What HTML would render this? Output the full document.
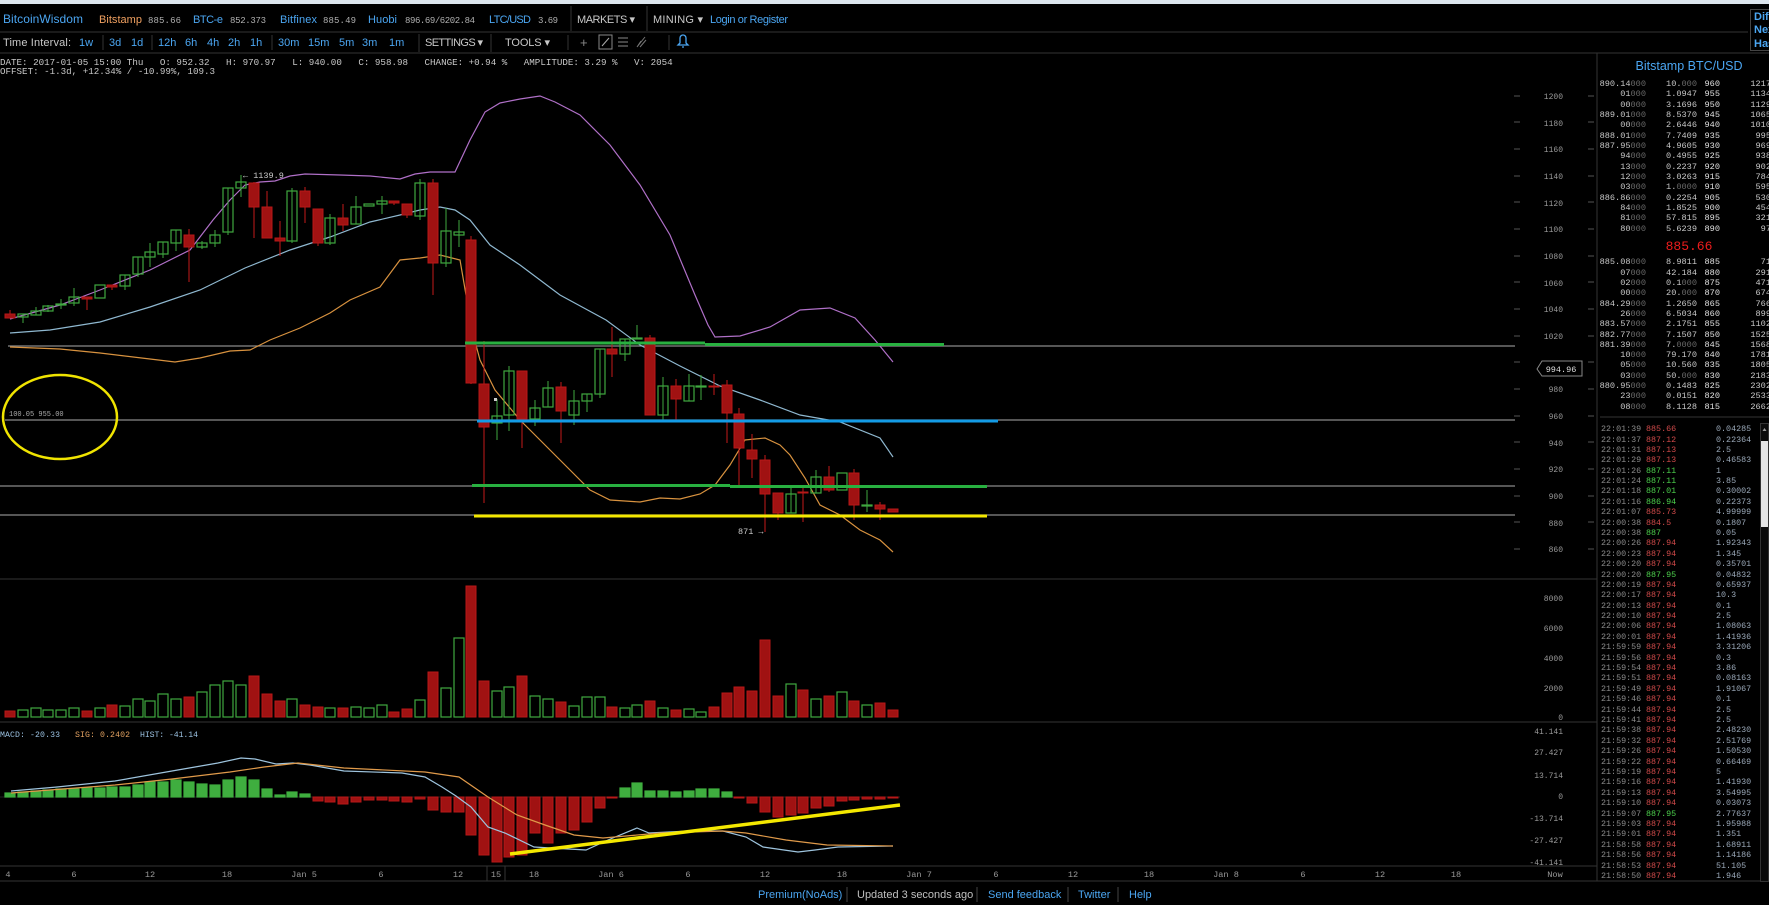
<!DOCTYPE html>
<html><head><meta charset="utf-8"><style>
html,body{margin:0;padding:0;background:#000;width:1769px;height:905px;overflow:hidden}
svg{display:block}
.s{font-family:"Liberation Sans",sans-serif}
.m{font-family:"Liberation Mono",monospace}
.r line{stroke:#c41a1a;stroke-width:1}
.r rect{fill:#a01212;stroke:#b81818;stroke-width:1}
.g line{stroke:#3fa83f;stroke-width:1}
.g rect{fill:none;stroke:#3fa83f;stroke-width:1.2}
.gf rect{fill:#3fae3f;stroke:#3fae3f}
.ax{fill:#9a9a9a;font-size:8px}
.ob{font-size:8.6px}
.d{fill:#6a6a6a}.b{fill:#c8c8c8}.lv{fill:#e0e0e0}
.tr{font-size:8.4px}
.tt{fill:#8a8a8a}.tp{fill:#d04a4a}.tg{fill:#4cd04c}.ta{fill:#9aa8b8}
</style></head><body>
<svg width="1769" height="905" viewBox="0 0 1769 905" xmlns="http://www.w3.org/2000/svg">
<rect width="1769" height="905" fill="#000"/>
<rect x="0" y="0" width="1769" height="4" fill="#dde6ee"/>
<!-- nav -->
<g class="s" font-size="11">
<text x="3" y="23" fill="#4ba6f2" font-size="12" textLength="80">BitcoinWisdom</text>
<text x="99" y="23" fill="#f0a060" textLength="43">Bitstamp</text>
<text x="148" y="23" fill="#b0b0b0" class="m" font-size="9" textLength="33">885.66</text>
<text x="193" y="23" fill="#4ba6f2" textLength="30">BTC-e</text>
<text x="230" y="23" fill="#b0b0b0" class="m" font-size="9" textLength="36">852.373</text>
<text x="280" y="23" fill="#4ba6f2" textLength="37">Bitfinex</text>
<text x="323" y="23" fill="#b0b0b0" class="m" font-size="9" textLength="33">885.49</text>
<text x="368" y="23" fill="#4ba6f2" textLength="29">Huobi</text>
<text x="405" y="23" fill="#b0b0b0" class="m" font-size="9" textLength="70">896.69/6202.84</text>
<text x="489" y="23" fill="#4ba6f2" textLength="42">LTC/USD</text>
<text x="538" y="23" fill="#b0b0b0" class="m" font-size="9" textLength="20">3.69</text>
<text x="577" y="23" fill="#c8c8c8" textLength="58">MARKETS ▾</text>
<text x="653" y="23" fill="#c8c8c8" textLength="50">MINING ▾</text>
<text x="710" y="23" fill="#4ba6f2" textLength="78">Login or Register</text>
<text x="3" y="46" fill="#c8c8c8" textLength="68">Time Interval:</text>
<g fill="#4ba6f2">
<text x="79" y="46">1w</text><text x="109" y="46">3d</text><text x="131" y="46">1d</text>
<text x="158" y="46">12h</text><text x="185" y="46">6h</text><text x="207" y="46">4h</text><text x="228" y="46">2h</text><text x="250" y="46">1h</text>
<text x="278" y="46">30m</text><text x="308" y="46">15m</text><text x="339" y="46">5m</text><text x="362" y="46">3m</text><text x="389" y="46">1m</text>
</g>
<text x="425" y="46" fill="#c8c8c8" textLength="58">SETTINGS ▾</text>
<text x="505" y="46" fill="#c8c8c8" textLength="45">TOOLS ▾</text>
<text x="580" y="47" fill="#888" font-size="13">+</text>
<rect x="599" y="35" width="13" height="14" fill="none" stroke="#888"/>
<line x1="602" y1="46" x2="609" y2="38" stroke="#aaa"/>
<g stroke="#888"><line x1="618" y1="38" x2="628" y2="38"/><line x1="618" y1="42" x2="628" y2="42"/><line x1="618" y1="46" x2="628" y2="46"/></g>
<path d="M637 47 L645 37 M637 47 L641 41 M640 47 L646 40" stroke="#777" fill="none"/>
<path d="M680 38 a3 3 0 0 1 6 0 v5 l2 2 h-10 l2 -2 z M682 47 h2" stroke="#4ba6f2" fill="none" stroke-width="1.3"/>
</g>
<g stroke="#333">
<line x1="571" y1="6" x2="571" y2="31"/><line x1="647" y1="6" x2="647" y2="31"/>
<line x1="103" y1="35" x2="103" y2="50"/><line x1="152" y1="35" x2="152" y2="50"/><line x1="272" y1="35" x2="272" y2="50"/>
<line x1="419" y1="34" x2="419" y2="52"/><line x1="491" y1="34" x2="491" y2="52"/><line x1="568" y1="35" x2="568" y2="50"/><line x1="669" y1="35" x2="669" y2="50"/>
</g>
<line x1="0" y1="32" x2="1748" y2="32" stroke="#333"/>
<line x1="0" y1="53" x2="1769" y2="53" stroke="#333"/>
<rect x="1750.5" y="9.5" width="20" height="41" fill="none" stroke="#444"/>
<g class="s" font-size="11" font-weight="bold" fill="#4ba6f2"><text x="1754" y="20">Dif</text><text x="1754" y="33">Nex</text><text x="1754" y="47">Has</text></g>
<!-- info -->
<g class="m" font-size="9.2" fill="#c8c8c8">
<text x="0" y="65" xml:space="preserve">DATE: 2017-01-05 15:00 Thu   O: 952.32   H: 970.97   L: 940.00   C: 958.98   CHANGE: +0.94 %   AMPLITUDE: 3.29 %   V: 2054</text>
<text x="0" y="74">OFFSET: -1.3d, +12.34% / -10.99%, 109.3</text>
</g>
<!-- panel lines -->
<g stroke="#333">
<line x1="0" y1="579" x2="1597" y2="579"/><line x1="0" y1="722" x2="1597" y2="722"/>
<line x1="0" y1="866" x2="1597" y2="866"/><line x1="0" y1="881" x2="1769" y2="881"/>
<line x1="1597" y1="53" x2="1597" y2="881"/>
<line x1="1600" y1="417" x2="1769" y2="417"/>
<line x1="487" y1="866" x2="487" y2="881"/><line x1="505" y1="866" x2="505" y2="881"/>
</g>
<!-- price axis -->
<g class="m ax" text-anchor="end">
<text x="1563" y="99">1200</text><text x="1563" y="126">1180</text><text x="1563" y="152">1160</text><text x="1563" y="179">1140</text><text x="1563" y="206">1120</text><text x="1563" y="232">1100</text><text x="1563" y="259">1080</text><text x="1563" y="286">1060</text><text x="1563" y="312">1040</text><text x="1563" y="339">1020</text><text x="1563" y="366">1000</text><text x="1563" y="392">980</text><text x="1563" y="419">960</text><text x="1563" y="446">940</text><text x="1563" y="472">920</text><text x="1563" y="499">900</text><text x="1563" y="526">880</text><text x="1563" y="552">860</text>
<text x="1563" y="601">8000</text><text x="1563" y="631">6000</text><text x="1563" y="661">4000</text><text x="1563" y="691">2000</text><text x="1563" y="720">0</text>
<text x="1563" y="734">41.141</text><text x="1563" y="755">27.427</text><text x="1563" y="778">13.714</text><text x="1563" y="799">0</text><text x="1563" y="821">-13.714</text><text x="1563" y="843">-27.427</text><text x="1563" y="865">-41.141</text>
</g>
<g stroke="#555">
<path d="M1514 96h6M1514 122h6M1514 149h6M1514 176h6M1514 202h6M1514 229h6M1514 256h6M1514 282h6M1514 309h6M1514 336h6M1514 362h6M1514 389h6M1514 416h6M1514 442h6M1514 469h6M1514 496h6M1514 522h6M1514 549h6"/>
<path d="M1588 96h6M1588 122h6M1588 149h6M1588 176h6M1588 202h6M1588 229h6M1588 256h6M1588 282h6M1588 309h6M1588 336h6M1588 362h6M1588 389h6M1588 416h6M1588 442h6M1588 469h6M1588 496h6M1588 522h6M1588 549h6"/>
</g>
<path d="M1537 369 L1542 361 H1582 V376 H1542 Z" fill="#000" stroke="#888"/>
<text x="1561" y="372" class="m" font-size="8.5" fill="#ddd" text-anchor="middle">994.96</text>
<!-- horizontal gray lines -->
<g stroke="#8a8a8a" stroke-width="1.3">
<line x1="8" y1="346" x2="1515" y2="346"/><line x1="5" y1="420" x2="1515" y2="420"/>
<line x1="0" y1="486" x2="1515" y2="486"/><line x1="0" y1="515" x2="1515" y2="515"/>
</g>
<!-- bollinger -->
<polyline fill="none" stroke="#b070c8" stroke-width="1.2" points="10,319 60,305 100,290 150,270 190,250 213,220 230,200 245,185 260,182 275,181 290,176 305,174 340,175 370,176 400,179 415,174 430,172 455,172 470,140 485,112 500,103 520,99 540,96 555,102 580,115 610,145 640,185 670,235 695,295 708,325 715,337 740,336 770,327 800,310 830,308 855,318 875,340 893,362"/>
<polyline fill="none" stroke="#8fb8d0" stroke-width="1.2" points="10,333 50,330 100,322 150,307 200,290 245,268 290,250 330,237 370,222 400,215 420,210 440,207 455,210 470,220 490,245 520,265 560,295 606,320 640,345 680,366 720,386 760,400 800,415 840,422 880,438 893,457"/>
<polyline fill="none" stroke="#d8923f" stroke-width="1.2" points="10,347 60,349 100,353 150,359 175,362 200,358 230,351 250,350 270,340 300,328 330,313 350,300 380,287 400,260 420,258 440,255 460,260 472,330 480,360 495,390 520,420 540,440 570,470 590,490 610,500 640,502 660,498 680,499 700,494 715,485 730,465 745,440 765,438 780,445 790,455 805,478 820,505 840,515 860,530 880,540 893,552"/>
<!-- candles -->
<g class="r">
<line x1="10" y1="310" x2="10" y2="318"/><rect x="5" y="314" width="10" height="4"/>
<line x1="87" y1="297" x2="87" y2="310"/><rect x="82" y="297" width="10" height="2"/>
<line x1="112" y1="285" x2="112" y2="290"/><rect x="107" y="285" width="10" height="2"/>
<line x1="189" y1="229" x2="189" y2="282"/><rect x="184" y="235" width="10" height="12"/>
<line x1="254" y1="182" x2="254" y2="238"/><rect x="249" y="183" width="10" height="24"/>
<line x1="267" y1="191" x2="267" y2="238"/><rect x="262" y="207" width="10" height="31"/>
<line x1="280" y1="221" x2="280" y2="256"/><rect x="275" y="238" width="10" height="3"/>
<line x1="305" y1="187" x2="305" y2="223"/><rect x="300" y="191" width="10" height="16"/>
<line x1="318" y1="209" x2="318" y2="246"/><rect x="313" y="209" width="10" height="34"/>
<line x1="343" y1="204" x2="343" y2="231"/><rect x="338" y="218" width="10" height="7"/>
<line x1="394" y1="201" x2="394" y2="205"/><rect x="389" y="201" width="10" height="2"/>
<line x1="407" y1="204" x2="407" y2="218"/><rect x="402" y="204" width="10" height="11"/>
<line x1="433" y1="179" x2="433" y2="295"/><rect x="428" y="183" width="10" height="80"/>
<line x1="471" y1="236" x2="471" y2="384"/><rect x="466" y="240" width="10" height="143"/>
<line x1="484" y1="341" x2="484" y2="503"/><rect x="479" y="384" width="10" height="43"/>
<line x1="522" y1="371" x2="522" y2="448"/><rect x="517" y="371" width="10" height="48"/>
<line x1="561" y1="382" x2="561" y2="443"/><rect x="556" y="387" width="10" height="24"/>
<line x1="612" y1="327" x2="612" y2="377"/><rect x="607" y="349" width="10" height="5"/>
<line x1="650" y1="335" x2="650" y2="415"/><rect x="645" y="338" width="10" height="77"/>
<line x1="676" y1="379" x2="676" y2="420"/><rect x="671" y="386" width="10" height="13"/>
<line x1="714" y1="374" x2="714" y2="395"/><rect x="709" y="386" width="10" height="1"/>
<line x1="727" y1="380" x2="727" y2="443"/><rect x="722" y="385" width="10" height="28"/>
<line x1="739" y1="408" x2="739" y2="485"/><rect x="734" y="414" width="10" height="34"/>
<line x1="752" y1="434" x2="752" y2="478"/><rect x="747" y="450" width="10" height="9"/>
<line x1="765" y1="455" x2="765" y2="532"/><rect x="760" y="460" width="10" height="34"/>
<line x1="778" y1="493" x2="778" y2="520"/><rect x="773" y="493" width="10" height="20"/>
<line x1="803" y1="488" x2="803" y2="522"/><rect x="798" y="492" width="10" height="1"/>
<line x1="829" y1="466" x2="829" y2="492"/><rect x="824" y="477" width="10" height="13"/>
<line x1="854" y1="469" x2="854" y2="520"/><rect x="849" y="473" width="10" height="32"/>
<line x1="880" y1="502" x2="880" y2="520"/><rect x="875" y="505" width="10" height="4"/>
<rect x="888" y="509" width="10" height="3"/>
</g>
<g class="g">
<line x1="23" y1="314" x2="23" y2="323"/><rect x="18" y="314" width="10" height="3"/>
<line x1="36" y1="307" x2="36" y2="315"/><rect x="31" y="311" width="10" height="4"/>
<line x1="48" y1="305" x2="48" y2="312"/><rect x="43" y="306" width="10" height="5"/>
<line x1="61" y1="299" x2="61" y2="309"/><rect x="56" y="304" width="10" height="1"/>
<line x1="74" y1="288" x2="74" y2="306"/><rect x="69" y="297" width="10" height="6"/>
<rect x="95" y="285" width="10" height="13"/>
<line x1="125" y1="275" x2="125" y2="290"/><rect x="120" y="275" width="10" height="11"/>
<line x1="138" y1="257" x2="138" y2="277"/><rect x="133" y="257" width="10" height="17"/>
<line x1="150" y1="243" x2="150" y2="267"/><rect x="145" y="252" width="10" height="5"/>
<line x1="163" y1="242" x2="163" y2="258"/><rect x="158" y="242" width="10" height="12"/>
<line x1="176" y1="230" x2="176" y2="251"/><rect x="171" y="230" width="10" height="13"/>
<line x1="202" y1="241" x2="202" y2="249"/><rect x="197" y="243" width="10" height="4"/>
<line x1="215" y1="230" x2="215" y2="247"/><rect x="210" y="235" width="10" height="8"/>
<line x1="228" y1="188" x2="228" y2="235"/><rect x="223" y="188" width="10" height="44"/>
<line x1="241" y1="175" x2="241" y2="197"/><rect x="236" y="182" width="10" height="6"/>
<line x1="292" y1="188" x2="292" y2="243"/><rect x="287" y="191" width="10" height="50"/>
<line x1="330" y1="214" x2="330" y2="245"/><rect x="325" y="218" width="10" height="25"/>
<line x1="356" y1="196" x2="356" y2="224"/><rect x="351" y="207" width="10" height="17"/>
<rect x="364" y="204" width="10" height="2"/>
<line x1="382" y1="196" x2="382" y2="214"/><rect x="377" y="201" width="10" height="3"/>
<line x1="420" y1="179" x2="420" y2="220"/><rect x="415" y="183" width="10" height="33"/>
<line x1="446" y1="208" x2="446" y2="267"/><rect x="441" y="231" width="10" height="32"/>
<line x1="459" y1="220" x2="459" y2="247"/><rect x="454" y="232" width="10" height="3"/>
<line x1="497" y1="399" x2="497" y2="440"/><rect x="492" y="416" width="10" height="7"/>
<line x1="509" y1="366" x2="509" y2="431"/><rect x="504" y="371" width="10" height="44"/>
<line x1="535" y1="400" x2="535" y2="426"/><rect x="530" y="408" width="10" height="11"/>
<line x1="548" y1="381" x2="548" y2="407"/><rect x="543" y="388" width="10" height="19"/>
<line x1="574" y1="390" x2="574" y2="425"/><rect x="569" y="401" width="10" height="14"/>
<line x1="587" y1="394" x2="587" y2="412"/><rect x="582" y="394" width="10" height="7"/>
<line x1="600" y1="349" x2="600" y2="398"/><rect x="595" y="349" width="10" height="45"/>
<line x1="625" y1="339" x2="625" y2="361"/><rect x="620" y="339" width="10" height="15"/>
<line x1="637" y1="325" x2="637" y2="339"/><rect x="632" y="338" width="10" height="1"/>
<line x1="663" y1="377" x2="663" y2="420"/><rect x="658" y="386" width="10" height="29"/>
<line x1="689" y1="374" x2="689" y2="401"/><rect x="684" y="386" width="10" height="15"/>
<line x1="701" y1="375" x2="701" y2="400"/><rect x="696" y="386" width="10" height="1"/>
<line x1="791" y1="488" x2="791" y2="513"/><rect x="786" y="494" width="10" height="19"/>
<line x1="816" y1="470" x2="816" y2="493"/><rect x="811" y="477" width="10" height="16"/>
<rect x="837" y="473" width="10" height="17"/>
<line x1="867" y1="490" x2="867" y2="512"/><rect x="862" y="505" width="10" height="1"/>
</g>
<!-- drawn lines -->
<g stroke-width="3">
<line x1="465" y1="343" x2="705" y2="343" stroke="#28b040"/>
<line x1="705" y1="344.5" x2="944" y2="344.5" stroke="#28b040"/>
<line x1="477" y1="421" x2="998" y2="421" stroke="#139be6"/>
<line x1="472" y1="485.5" x2="730" y2="485.5" stroke="#28b040"/>
<line x1="730" y1="486.5" x2="987" y2="486.5" stroke="#28b040"/>
<line x1="474" y1="516" x2="987" y2="516" stroke="#f4e800"/>
</g>
<ellipse cx="60" cy="417" rx="57" ry="42" fill="none" stroke="#f0e400" stroke-width="2.5"/>
<text x="9" y="416" class="m" font-size="7" fill="#aaa">100.05 955.00</text>
<rect x="494" y="398" width="3" height="3" fill="#ccc"/>
<text x="243" y="178" class="m" font-size="8.5" fill="#ccc">← 1139.9</text>
<text x="738" y="534" class="m" font-size="8.5" fill="#ccc">871 →</text>
<!-- volume -->
<g class="r">
<rect x="5" y="711" width="10" height="6"/><rect x="82" y="711" width="10" height="6"/><rect x="107" y="705" width="10" height="12"/><rect x="184" y="697" width="10" height="20"/><rect x="249" y="676" width="10" height="41"/><rect x="262" y="694" width="10" height="23"/><rect x="275" y="701" width="10" height="16"/><rect x="300" y="705" width="10" height="12"/><rect x="313" y="707" width="10" height="10"/><rect x="338" y="708" width="10" height="9"/><rect x="389" y="712" width="10" height="5"/><rect x="402" y="709" width="10" height="8"/><rect x="428" y="672" width="10" height="45"/><rect x="466" y="586" width="10" height="131"/><rect x="479" y="681" width="10" height="36"/><rect x="517" y="676" width="10" height="41"/><rect x="556" y="702" width="10" height="15"/><rect x="607" y="707" width="10" height="10"/><rect x="645" y="701" width="10" height="16"/><rect x="671" y="710" width="10" height="7"/><rect x="709" y="707" width="10" height="10"/><rect x="722" y="693" width="10" height="24"/><rect x="734" y="687" width="10" height="30"/><rect x="747" y="691" width="10" height="26"/><rect x="760" y="640" width="10" height="77"/><rect x="773" y="696" width="10" height="21"/><rect x="798" y="690" width="10" height="27"/><rect x="824" y="696" width="10" height="21"/><rect x="849" y="701" width="10" height="16"/><rect x="875" y="703" width="10" height="14"/><rect x="888" y="710" width="10" height="7"/>
</g>
<g class="g">
<rect x="18" y="710" width="10" height="7"/><rect x="31" y="708" width="10" height="9"/><rect x="43" y="710" width="10" height="7"/><rect x="56" y="710" width="10" height="7"/><rect x="69" y="708" width="10" height="9"/><rect x="95" y="708" width="10" height="9"/><rect x="120" y="706" width="10" height="11"/><rect x="133" y="699" width="10" height="18"/><rect x="145" y="701" width="10" height="16"/><rect x="158" y="694" width="10" height="23"/><rect x="171" y="699" width="10" height="18"/><rect x="197" y="692" width="10" height="25"/><rect x="210" y="685" width="10" height="32"/><rect x="223" y="681" width="10" height="36"/><rect x="236" y="685" width="10" height="32"/><rect x="287" y="699" width="10" height="18"/><rect x="325" y="708" width="10" height="9"/><rect x="351" y="707" width="10" height="10"/><rect x="364" y="708" width="10" height="9"/><rect x="377" y="705" width="10" height="12"/><rect x="415" y="700" width="10" height="17"/><rect x="441" y="688" width="10" height="29"/><rect x="454" y="638" width="10" height="79"/><rect x="492" y="691" width="10" height="26"/><rect x="504" y="687" width="10" height="30"/><rect x="530" y="696" width="10" height="21"/><rect x="543" y="699" width="10" height="18"/><rect x="569" y="706" width="10" height="11"/><rect x="582" y="697" width="10" height="20"/><rect x="595" y="697" width="10" height="20"/><rect x="620" y="708" width="10" height="9"/><rect x="632" y="705" width="10" height="12"/><rect x="658" y="708" width="10" height="9"/><rect x="684" y="709" width="10" height="8"/><rect x="696" y="712" width="10" height="5"/><rect x="786" y="684" width="10" height="33"/><rect x="811" y="699" width="10" height="18"/><rect x="837" y="692" width="10" height="25"/><rect x="862" y="705" width="10" height="12"/>
</g>
<!-- MACD -->
<g class="m" font-size="8.2"><text x="0" y="737" fill="#9ac0e0" textLength="60">MACD: -20.33</text><text x="75" y="737" fill="#e0a060" textLength="55">SIG: 0.2402</text><text x="140" y="737" fill="#9ac0e0" textLength="58">HIST: -41.14</text></g>
<line x1="0" y1="797" x2="900" y2="797" stroke="#222"/>
<g class="g gf">
<rect x="5" y="793" width="10" height="4"/><rect x="18" y="792" width="10" height="5"/><rect x="31" y="791" width="10" height="6"/><rect x="43" y="790" width="10" height="7"/><rect x="56" y="789" width="10" height="8"/><rect x="69" y="789" width="10" height="8"/><rect x="82" y="788" width="10" height="9"/><rect x="95" y="788" width="10" height="9"/><rect x="107" y="787" width="10" height="10"/><rect x="120" y="787" width="10" height="10"/><rect x="133" y="785" width="10" height="12"/><rect x="145" y="782" width="10" height="15"/><rect x="158" y="782" width="10" height="15"/><rect x="171" y="780" width="10" height="17"/><rect x="184" y="782" width="10" height="15"/><rect x="197" y="784" width="10" height="13"/><rect x="210" y="785" width="10" height="12"/><rect x="223" y="780" width="10" height="17"/><rect x="236" y="777" width="10" height="20"/><rect x="249" y="780" width="10" height="17"/><rect x="262" y="789" width="10" height="8"/><rect x="275" y="795" width="10" height="2"/><rect x="287" y="792" width="10" height="5"/><rect x="300" y="794" width="10" height="3"/>
<rect x="620" y="788" width="10" height="9"/><rect x="632" y="783" width="10" height="14"/><rect x="645" y="791" width="10" height="6"/><rect x="658" y="791" width="10" height="6"/><rect x="671" y="792" width="10" height="5"/><rect x="684" y="791" width="10" height="6"/><rect x="696" y="789" width="10" height="8"/><rect x="709" y="789" width="10" height="8"/><rect x="722" y="792" width="10" height="5"/>
</g>
<g class="r">
<rect x="313" y="797" width="10" height="4"/><rect x="325" y="797" width="10" height="5"/><rect x="338" y="797" width="10" height="7"/><rect x="351" y="797" width="10" height="5"/><rect x="364" y="797" width="10" height="3"/><rect x="377" y="797" width="10" height="3"/><rect x="389" y="797" width="10" height="4"/><rect x="402" y="797" width="10" height="5"/><rect x="415" y="797" width="10" height="2"/><rect x="428" y="797" width="10" height="13"/><rect x="441" y="797" width="10" height="15"/><rect x="454" y="797" width="10" height="15"/><rect x="466" y="797" width="10" height="38"/><rect x="479" y="797" width="10" height="58"/><rect x="492" y="797" width="10" height="65"/><rect x="504" y="797" width="10" height="60"/><rect x="517" y="797" width="10" height="58"/><rect x="530" y="797" width="10" height="36"/><rect x="543" y="797" width="10" height="46"/><rect x="556" y="797" width="10" height="36"/><rect x="569" y="797" width="10" height="33"/><rect x="582" y="797" width="10" height="25"/><rect x="595" y="797" width="10" height="11"/><rect x="607" y="797" width="10" height="1"/>
<rect x="734" y="797" width="10" height="1"/><rect x="747" y="797" width="10" height="6"/><rect x="760" y="797" width="10" height="15"/><rect x="773" y="797" width="10" height="20"/><rect x="786" y="797" width="10" height="18"/><rect x="798" y="797" width="10" height="16"/><rect x="811" y="797" width="10" height="11"/><rect x="824" y="797" width="10" height="9"/><rect x="837" y="797" width="10" height="4"/><rect x="849" y="797" width="10" height="3"/><rect x="862" y="797" width="10" height="2"/><rect x="875" y="797" width="10" height="2"/><rect x="888" y="797" width="10" height="1"/>
</g>
<polyline fill="none" stroke="#9ec4de" stroke-width="1.2" points="11,791 57,787 115,781 172,771 218,763 241,758 255,759 276,764 293,763 310,765 344,771 402,773 425,777 442,787 456,796 471,807 488,827 505,833 534,847 551,848 586,850 608,840 637,828 649,833 689,831 723,831 746,837 763,847 798,852 815,850 838,847 893,846"/>
<polyline fill="none" stroke="#e09a4a" stroke-width="1.2" points="11,793 115,785 172,779 230,772 264,767 298,763 344,768 425,772 459,777 488,797 517,815 545,825 574,835 603,838 660,833 723,831 746,833 786,840 827,845 893,846"/>
<line x1="510" y1="854" x2="900" y2="805" stroke="#f4e800" stroke-width="3.5"/>
<!-- time axis -->
<g class="m" font-size="8.6" fill="#9a9a9a" text-anchor="middle">
<text x="8" y="877">4</text><text x="74" y="877">6</text><text x="150" y="877">12</text><text x="227" y="877">18</text><text x="304" y="877">Jan 5</text><text x="381" y="877">6</text><text x="458" y="877">12</text><text x="496" y="877">15</text><text x="534" y="877">18</text><text x="611" y="877">Jan 6</text><text x="688" y="877">6</text><text x="765" y="877">12</text><text x="842" y="877">18</text><text x="919" y="877">Jan 7</text><text x="996" y="877">6</text><text x="1073" y="877">12</text><text x="1149" y="877">18</text><text x="1226" y="877">Jan 8</text><text x="1303" y="877">6</text><text x="1380" y="877">12</text><text x="1456" y="877">18</text><text x="1555" y="877">Now</text>
</g>
<!-- order book -->
<text x="1689" y="70" class="s" font-size="12.5" fill="#4ba6f2" text-anchor="middle">Bitstamp BTC/USD</text>
<g class="m ob" text-anchor="end">
<text x="1646" y="86"><tspan class="b">890.14</tspan><tspan class="d">000</tspan></text><text x="1697" y="86"><tspan class="b">10.</tspan><tspan class="d">000</tspan></text><text x="1720" y="86" class="lv">960</text><text x="1771" y="86" class="b">1217</text>
<text x="1646" y="96"><tspan class="b">01</tspan><tspan class="d">000</tspan></text><text x="1697" y="96" class="b">1.0947</text><text x="1720" y="96" class="lv">955</text><text x="1771" y="96" class="b">1134</text>
<text x="1646" y="107"><tspan class="b">00</tspan><tspan class="d">000</tspan></text><text x="1697" y="107" class="b">3.1696</text><text x="1720" y="107" class="lv">950</text><text x="1771" y="107" class="b">1129</text>
<text x="1646" y="117"><tspan class="b">889.01</tspan><tspan class="d">000</tspan></text><text x="1697" y="117" class="b">8.5370</text><text x="1720" y="117" class="lv">945</text><text x="1771" y="117" class="b">1065</text>
<text x="1646" y="127"><tspan class="b">00</tspan><tspan class="d">000</tspan></text><text x="1697" y="127" class="b">2.6446</text><text x="1720" y="127" class="lv">940</text><text x="1771" y="127" class="b">1010</text>
<text x="1646" y="138"><tspan class="b">888.01</tspan><tspan class="d">000</tspan></text><text x="1697" y="138" class="b">7.7409</text><text x="1720" y="138" class="lv">935</text><text x="1771" y="138" class="b">995</text>
<text x="1646" y="148"><tspan class="b">887.95</tspan><tspan class="d">000</tspan></text><text x="1697" y="148" class="b">4.9605</text><text x="1720" y="148" class="lv">930</text><text x="1771" y="148" class="b">969</text>
<text x="1646" y="158"><tspan class="b">94</tspan><tspan class="d">000</tspan></text><text x="1697" y="158" class="b">0.4955</text><text x="1720" y="158" class="lv">925</text><text x="1771" y="158" class="b">938</text>
<text x="1646" y="169"><tspan class="b">13</tspan><tspan class="d">000</tspan></text><text x="1697" y="169" class="b">0.2237</text><text x="1720" y="169" class="lv">920</text><text x="1771" y="169" class="b">902</text>
<text x="1646" y="179"><tspan class="b">12</tspan><tspan class="d">000</tspan></text><text x="1697" y="179" class="b">3.0263</text><text x="1720" y="179" class="lv">915</text><text x="1771" y="179" class="b">784</text>
<text x="1646" y="189"><tspan class="b">03</tspan><tspan class="d">000</tspan></text><text x="1697" y="189"><tspan class="b">1.</tspan><tspan class="d">0000</tspan></text><text x="1720" y="189" class="lv">910</text><text x="1771" y="189" class="b">595</text>
<text x="1646" y="200"><tspan class="b">886.86</tspan><tspan class="d">000</tspan></text><text x="1697" y="200" class="b">0.2254</text><text x="1720" y="200" class="lv">905</text><text x="1771" y="200" class="b">530</text>
<text x="1646" y="210"><tspan class="b">84</tspan><tspan class="d">000</tspan></text><text x="1697" y="210" class="b">1.8525</text><text x="1720" y="210" class="lv">900</text><text x="1771" y="210" class="b">454</text>
<text x="1646" y="220"><tspan class="b">81</tspan><tspan class="d">000</tspan></text><text x="1697" y="220" class="b">57.815</text><text x="1720" y="220" class="lv">895</text><text x="1771" y="220" class="b">321</text>
<text x="1646" y="231"><tspan class="b">80</tspan><tspan class="d">000</tspan></text><text x="1697" y="231" class="b">5.6239</text><text x="1720" y="231" class="lv">890</text><text x="1771" y="231" class="b">97</text>
</g>
<text x="1689" y="250" class="m" font-size="13" fill="#ee1c1c" text-anchor="middle">885.66</text>
<g class="m ob" text-anchor="end">
<text x="1646" y="264"><tspan class="b">885.08</tspan><tspan class="d">000</tspan></text><text x="1697" y="264" class="b">8.9811</text><text x="1720" y="264" class="lv">885</text><text x="1771" y="264" class="b">71</text>
<text x="1646" y="275"><tspan class="b">07</tspan><tspan class="d">000</tspan></text><text x="1697" y="275" class="b">42.184</text><text x="1720" y="275" class="lv">880</text><text x="1771" y="275" class="b">291</text>
<text x="1646" y="285"><tspan class="b">02</tspan><tspan class="d">000</tspan></text><text x="1697" y="285"><tspan class="b">0.1</tspan><tspan class="d">000</tspan></text><text x="1720" y="285" class="lv">875</text><text x="1771" y="285" class="b">471</text>
<text x="1646" y="295"><tspan class="b">00</tspan><tspan class="d">000</tspan></text><text x="1697" y="295"><tspan class="b">20.</tspan><tspan class="d">000</tspan></text><text x="1720" y="295" class="lv">870</text><text x="1771" y="295" class="b">674</text>
<text x="1646" y="306"><tspan class="b">884.29</tspan><tspan class="d">000</tspan></text><text x="1697" y="306" class="b">1.2650</text><text x="1720" y="306" class="lv">865</text><text x="1771" y="306" class="b">766</text>
<text x="1646" y="316"><tspan class="b">26</tspan><tspan class="d">000</tspan></text><text x="1697" y="316" class="b">6.5034</text><text x="1720" y="316" class="lv">860</text><text x="1771" y="316" class="b">899</text>
<text x="1646" y="326"><tspan class="b">883.57</tspan><tspan class="d">000</tspan></text><text x="1697" y="326" class="b">2.1751</text><text x="1720" y="326" class="lv">855</text><text x="1771" y="326" class="b">1102</text>
<text x="1646" y="337"><tspan class="b">882.77</tspan><tspan class="d">000</tspan></text><text x="1697" y="337" class="b">7.1507</text><text x="1720" y="337" class="lv">850</text><text x="1771" y="337" class="b">1525</text>
<text x="1646" y="347"><tspan class="b">881.39</tspan><tspan class="d">000</tspan></text><text x="1697" y="347"><tspan class="b">7.</tspan><tspan class="d">0000</tspan></text><text x="1720" y="347" class="lv">845</text><text x="1771" y="347" class="b">1568</text>
<text x="1646" y="357"><tspan class="b">10</tspan><tspan class="d">000</tspan></text><text x="1697" y="357" class="b">79.170</text><text x="1720" y="357" class="lv">840</text><text x="1771" y="357" class="b">1781</text>
<text x="1646" y="367"><tspan class="b">05</tspan><tspan class="d">000</tspan></text><text x="1697" y="367" class="b">10.560</text><text x="1720" y="367" class="lv">835</text><text x="1771" y="367" class="b">1805</text>
<text x="1646" y="378"><tspan class="b">03</tspan><tspan class="d">000</tspan></text><text x="1697" y="378"><tspan class="b">50.</tspan><tspan class="d">000</tspan></text><text x="1720" y="378" class="lv">830</text><text x="1771" y="378" class="b">2183</text>
<text x="1646" y="388"><tspan class="b">880.95</tspan><tspan class="d">000</tspan></text><text x="1697" y="388" class="b">0.1483</text><text x="1720" y="388" class="lv">825</text><text x="1771" y="388" class="b">2302</text>
<text x="1646" y="398"><tspan class="b">23</tspan><tspan class="d">000</tspan></text><text x="1697" y="398" class="b">0.0151</text><text x="1720" y="398" class="lv">820</text><text x="1771" y="398" class="b">2533</text>
<text x="1646" y="409"><tspan class="b">08</tspan><tspan class="d">000</tspan></text><text x="1697" y="409" class="b">8.1128</text><text x="1720" y="409" class="lv">815</text><text x="1771" y="409" class="b">2662</text>
</g>
<!-- trades -->
<g class="m tr">
<text y="431"><tspan x="1601" class="tt">22:01:39</tspan><tspan x="1646" class="tp">885.66</tspan><tspan x="1716" class="ta">0.04285</tspan></text>
<text y="442"><tspan x="1601" class="tt">22:01:37</tspan><tspan x="1646" class="tp">887.12</tspan><tspan x="1716" class="ta">0.22364</tspan></text>
<text y="452"><tspan x="1601" class="tt">22:01:31</tspan><tspan x="1646" class="tp">887.13</tspan><tspan x="1716" class="ta">2.5</tspan></text>
<text y="462"><tspan x="1601" class="tt">22:01:29</tspan><tspan x="1646" class="tp">887.13</tspan><tspan x="1716" class="ta">0.46583</tspan></text>
<text y="473"><tspan x="1601" class="tt">22:01:26</tspan><tspan x="1646" class="tg">887.11</tspan><tspan x="1716" class="ta">1</tspan></text>
<text y="483"><tspan x="1601" class="tt">22:01:24</tspan><tspan x="1646" class="tg">887.11</tspan><tspan x="1716" class="ta">3.85</tspan></text>
<text y="493"><tspan x="1601" class="tt">22:01:18</tspan><tspan x="1646" class="tg">887.01</tspan><tspan x="1716" class="ta">0.30002</tspan></text>
<text y="504"><tspan x="1601" class="tt">22:01:16</tspan><tspan x="1646" class="tg">886.94</tspan><tspan x="1716" class="ta">0.22373</tspan></text>
<text y="514"><tspan x="1601" class="tt">22:01:07</tspan><tspan x="1646" class="tp">885.73</tspan><tspan x="1716" class="ta">4.99999</tspan></text>
<text y="525"><tspan x="1601" class="tt">22:00:38</tspan><tspan x="1646" class="tp">884.5</tspan><tspan x="1716" class="ta">0.1807</tspan></text>
<text y="535"><tspan x="1601" class="tt">22:00:38</tspan><tspan x="1646" class="tg">887</tspan><tspan x="1716" class="ta">0.05</tspan></text>
<text y="545"><tspan x="1601" class="tt">22:00:26</tspan><tspan x="1646" class="tp">887.94</tspan><tspan x="1716" class="ta">1.92343</tspan></text>
<text y="556"><tspan x="1601" class="tt">22:00:23</tspan><tspan x="1646" class="tp">887.94</tspan><tspan x="1716" class="ta">1.345</tspan></text>
<text y="566"><tspan x="1601" class="tt">22:00:20</tspan><tspan x="1646" class="tp">887.94</tspan><tspan x="1716" class="ta">0.35701</tspan></text>
<text y="577"><tspan x="1601" class="tt">22:00:20</tspan><tspan x="1646" class="tg">887.95</tspan><tspan x="1716" class="ta">0.04832</tspan></text>
<text y="587"><tspan x="1601" class="tt">22:00:19</tspan><tspan x="1646" class="tp">887.94</tspan><tspan x="1716" class="ta">0.65937</tspan></text>
<text y="597"><tspan x="1601" class="tt">22:00:17</tspan><tspan x="1646" class="tp">887.94</tspan><tspan x="1716" class="ta">10.3</tspan></text>
<text y="608"><tspan x="1601" class="tt">22:00:13</tspan><tspan x="1646" class="tp">887.94</tspan><tspan x="1716" class="ta">0.1</tspan></text>
<text y="618"><tspan x="1601" class="tt">22:00:10</tspan><tspan x="1646" class="tp">887.94</tspan><tspan x="1716" class="ta">2.5</tspan></text>
<text y="628"><tspan x="1601" class="tt">22:00:06</tspan><tspan x="1646" class="tp">887.94</tspan><tspan x="1716" class="ta">1.08063</tspan></text>
<text y="639"><tspan x="1601" class="tt">22:00:01</tspan><tspan x="1646" class="tp">887.94</tspan><tspan x="1716" class="ta">1.41936</tspan></text>
<text y="649"><tspan x="1601" class="tt">21:59:59</tspan><tspan x="1646" class="tp">887.94</tspan><tspan x="1716" class="ta">3.31206</tspan></text>
<text y="660"><tspan x="1601" class="tt">21:59:56</tspan><tspan x="1646" class="tp">887.94</tspan><tspan x="1716" class="ta">0.3</tspan></text>
<text y="670"><tspan x="1601" class="tt">21:59:54</tspan><tspan x="1646" class="tp">887.94</tspan><tspan x="1716" class="ta">3.86</tspan></text>
<text y="680"><tspan x="1601" class="tt">21:59:51</tspan><tspan x="1646" class="tp">887.94</tspan><tspan x="1716" class="ta">0.08163</tspan></text>
<text y="691"><tspan x="1601" class="tt">21:59:49</tspan><tspan x="1646" class="tp">887.94</tspan><tspan x="1716" class="ta">1.91067</tspan></text>
<text y="701"><tspan x="1601" class="tt">21:59:46</tspan><tspan x="1646" class="tp">887.94</tspan><tspan x="1716" class="ta">0.1</tspan></text>
<text y="712"><tspan x="1601" class="tt">21:59:44</tspan><tspan x="1646" class="tp">887.94</tspan><tspan x="1716" class="ta">2.5</tspan></text>
<text y="722"><tspan x="1601" class="tt">21:59:41</tspan><tspan x="1646" class="tp">887.94</tspan><tspan x="1716" class="ta">2.5</tspan></text>
<text y="732"><tspan x="1601" class="tt">21:59:38</tspan><tspan x="1646" class="tp">887.94</tspan><tspan x="1716" class="ta">2.48230</tspan></text>
<text y="743"><tspan x="1601" class="tt">21:59:32</tspan><tspan x="1646" class="tp">887.94</tspan><tspan x="1716" class="ta">2.51769</tspan></text>
<text y="753"><tspan x="1601" class="tt">21:59:26</tspan><tspan x="1646" class="tp">887.94</tspan><tspan x="1716" class="ta">1.50530</tspan></text>
<text y="764"><tspan x="1601" class="tt">21:59:22</tspan><tspan x="1646" class="tp">887.94</tspan><tspan x="1716" class="ta">0.66469</tspan></text>
<text y="774"><tspan x="1601" class="tt">21:59:19</tspan><tspan x="1646" class="tp">887.94</tspan><tspan x="1716" class="ta">5</tspan></text>
<text y="784"><tspan x="1601" class="tt">21:59:16</tspan><tspan x="1646" class="tp">887.94</tspan><tspan x="1716" class="ta">1.41930</tspan></text>
<text y="795"><tspan x="1601" class="tt">21:59:13</tspan><tspan x="1646" class="tp">887.94</tspan><tspan x="1716" class="ta">3.54995</tspan></text>
<text y="805"><tspan x="1601" class="tt">21:59:10</tspan><tspan x="1646" class="tp">887.94</tspan><tspan x="1716" class="ta">0.03073</tspan></text>
<text y="816"><tspan x="1601" class="tt">21:59:07</tspan><tspan x="1646" class="tg">887.95</tspan><tspan x="1716" class="ta">2.77637</tspan></text>
<text y="826"><tspan x="1601" class="tt">21:59:03</tspan><tspan x="1646" class="tp">887.94</tspan><tspan x="1716" class="ta">1.95988</tspan></text>
<text y="836"><tspan x="1601" class="tt">21:59:01</tspan><tspan x="1646" class="tp">887.94</tspan><tspan x="1716" class="ta">1.351</tspan></text>
<text y="847"><tspan x="1601" class="tt">21:58:58</tspan><tspan x="1646" class="tp">887.94</tspan><tspan x="1716" class="ta">1.68911</tspan></text>
<text y="857"><tspan x="1601" class="tt">21:58:56</tspan><tspan x="1646" class="tp">887.94</tspan><tspan x="1716" class="ta">1.14186</tspan></text>
<text y="868"><tspan x="1601" class="tt">21:58:53</tspan><tspan x="1646" class="tp">887.94</tspan><tspan x="1716" class="ta">51.105</tspan></text>
<text y="878"><tspan x="1601" class="tt">21:58:50</tspan><tspan x="1646" class="tp">887.94</tspan><tspan x="1716" class="ta">1.946</tspan></text>
</g>
<rect x="1760.5" y="423.5" width="8" height="458" fill="#0a0a0a" stroke="#333"/>
<rect x="1761" y="441" width="7" height="86" fill="#e4e4e4"/>
<path d="M1762.5 431 l2 -3 l2 3z" fill="#999"/>
<!-- footer -->
<g class="s" font-size="11">
<text x="758" y="898" fill="#4ba6f2">Premium(NoAds)</text>
<text x="857" y="898" fill="#c0c0c0">Updated 3 seconds ago</text>
<text x="988" y="898" fill="#4ba6f2">Send feedback</text>
<text x="1078" y="898" fill="#4ba6f2">Twitter</text>
<text x="1129" y="898" fill="#4ba6f2">Help</text>
</g>
<g stroke="#444"><line x1="847" y1="887" x2="847" y2="902"/><line x1="977" y1="887" x2="977" y2="902"/><line x1="1068" y1="887" x2="1068" y2="902"/><line x1="1118" y1="887" x2="1118" y2="902"/></g>
</svg>
</body></html>
